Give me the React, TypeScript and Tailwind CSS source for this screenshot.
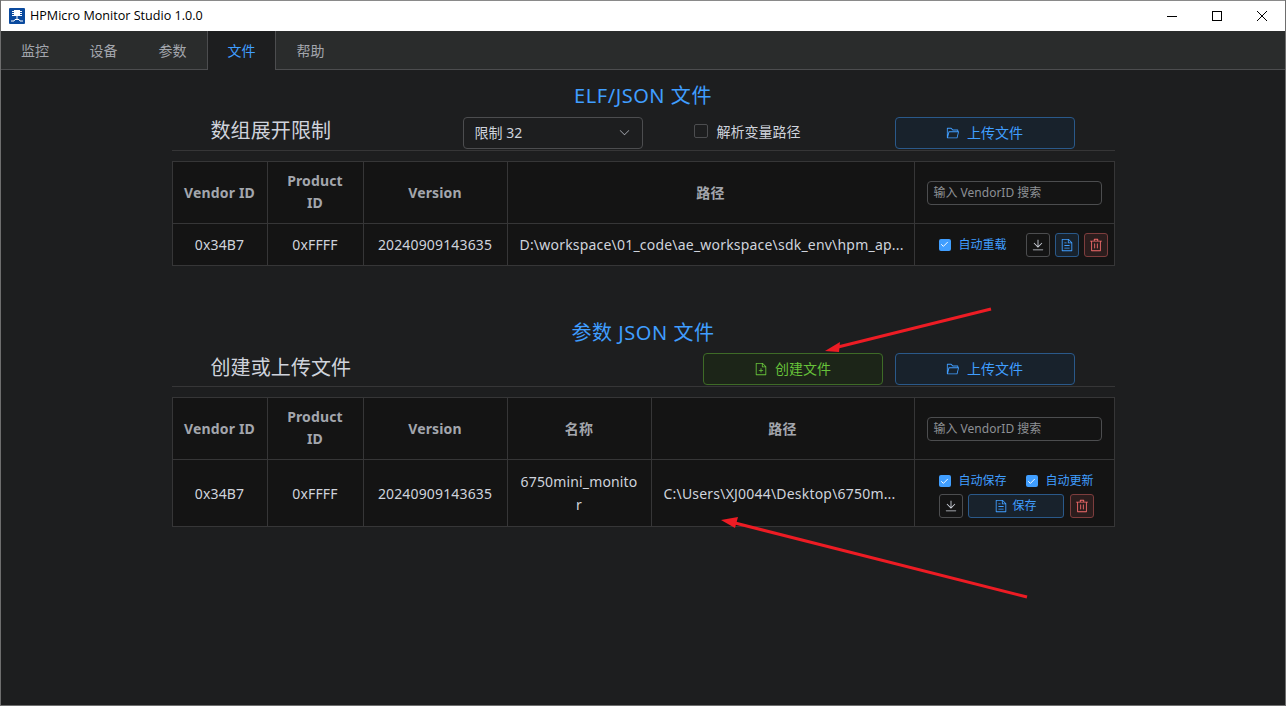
import React from "react";
import { Check } from "lucide-react";

const tabs = ["监控", "设备", "参数", "文件", "帮助"];
const cellB = "border-r border-b border-[#363637] text-center align-middle";
const th = `${cellB} text-[14px] font-bold leading-[22px] tracking-[0.15px] text-[#a3a6ad] px-[10px]`;
const td = `${cellB} text-[14px] leading-[23px] tracking-[0.15px] text-[#cfd3dc] px-[12px]`;
const pathCell = "border-r border-b border-[#363637] text-left align-middle whitespace-nowrap text-[14px] tracking-[0.2px] text-[#cfd3dc] px-[12px]";

// element style icons, 1024 box
const paths = {
  dl: "M160 832h704a32 32 0 1 1 0 64H160a32 32 0 1 1 0-64m384-253.696 236.288-236.352 45.248 45.248L508.8 704 192 387.2l45.248-45.248L480 584.704V128h64z",
  doc: "M832 384H576V128H192v768h640zm-26.496-64L640 154.496V320zM160 64h480l256 256v608a32 32 0 0 1-32 32H160a32 32 0 0 1-32-32V96a32 32 0 0 1 32-32m160 448h384v64H320zm0-192h160v64H320zm0 384h384v64H320z",
  del: "M160 256H96a32 32 0 0 1 0-64h256V95.936a32 32 0 0 1 32-32h256a32 32 0 0 1 32 32V192h256a32 32 0 1 1 0 64h-64v672a32 32 0 0 1-32 32H192a32 32 0 0 1-32-32zm448-64v-64H416v64zM224 896h576V256H224zm192-128a32 32 0 0 1-32-32V416a32 32 0 0 1 64 0v320a32 32 0 0 1-32 32m192 0a32 32 0 0 1-32-32V416a32 32 0 0 1 64 0v320a32 32 0 0 1-32 32",
  folder: "M878.08 448H241.92l-96 384h636.16l96-384zM832 384v-64H485.76L357.504 192H128v448l57.92-231.744A32 32 0 0 1 216.96 384zm-24.96 512H96a32 32 0 0 1-32-32V160a32 32 0 0 1 32-32h287.872l128.384 128H864a32 32 0 0 1 32 32v96h23.04a32 32 0 0 1 31.04 39.744l-112 448A32 32 0 0 1 807.04 896",
  add: "M832 384H576V128H192v768h640zm-26.496-64L640 154.496V320zM160 64h480l256 256v608a32 32 0 0 1-32 32H160a32 32 0 0 1-32-32V96a32 32 0 0 1 32-32m320 512V448h64v128h128v64H544v128h-64V640H352v-64z",
  down: "M831.872 340.864 512 652.672 192.128 340.864a30.59 30.59 0 0 0-42.752 0 29.12 29.12 0 0 0 0 41.6L489.664 714.24a32 32 0 0 0 44.672 0l340.288-331.712a29.12 29.12 0 0 0 0-41.728 30.59 30.59 0 0 0-42.752 0z",
};

const Ico = ({ name, size }: { name: keyof typeof paths; size: number }) => (
  <svg width={size} height={size} viewBox="0 0 1024 1024" fill="currentColor">
    <path d={paths[name]} />
  </svg>
);

const Box = ({ label }: { label: string }) => (
  <label className="flex items-center gap-[8px] text-[12px] text-[#409eff]">
    <span className="flex h-[12px] w-[12px] items-center justify-center rounded-[2px] bg-[#409eff]">
      <Check size={9} strokeWidth={2.5} className="text-white" />
    </span>
    {label}
  </label>
);

const IconBtn = ({ kind }: { kind: "dl" | "doc" | "del" }) => {
  const color =
    kind === "dl"
      ? "border-[#4c4d4f] text-[#cfd3dc]"
      : kind === "doc"
        ? "border-[#2a598a] bg-[#18222c] text-[#409eff]"
        : "border-[#7d3d3d] bg-[#2b1d1d] text-[#f56c6c]";
  return (
    <button className={`flex h-[24px] w-[24px] items-center justify-center rounded-[3px] border ${color}`}>
      <Ico name={kind} size={14} />
    </button>
  );
};

const ActionBtn = ({ green, label }: { green?: boolean; label: string }) => (
  <button
    className={`flex h-[32px] w-[180px] items-center justify-center gap-[7px] rounded-[4px] border pb-[1px] text-[14px] ${
      green ? "border-[#3e6b27] bg-[#1c2518] text-[#67c23a]" : "border-[#2a598a] bg-[#18222c] text-[#409eff]"
    }`}
  >
    <Ico name={green ? "add" : "folder"} size={14} />
    {label}
  </button>
);

const Search = () => (
  <div className="flex h-[24px] w-[175px] items-center rounded-[4px] border border-[#4c4d4f] pl-[6px] text-left text-[12px] text-[#8d9095]">
    输入 VendorID 搜索
  </div>
);

export default function App() {
  return (
    <div
      className="relative flex h-[706px] w-[1286px] flex-col overflow-hidden border border-t-0 border-[#6e6e6e] bg-[#1d1e1f]"
      style={{ fontFamily: '"Noto Sans", "Noto Sans CJK SC", sans-serif' }}
    >
      {/* title bar */}
      <div className="flex h-[31px] items-center border-t border-[#8a8a8a] bg-white pl-[8px] text-black">
        <svg width="16" height="16" viewBox="0 0 16 16">
          <rect width="16" height="16" rx="1" fill="#0b4a9e" />
          <rect x="5" y="2" width="6" height="6" fill="#fff" />
          <path d="M3 3.5h10M3 5.5h10M3 7.5h10M8 8v3" stroke="#fff" fill="none" />
          <path d="M2 13h3l1-1.500h4l1 1.500h3" stroke="#fff" fill="none" />
        </svg>
        <span className="ml-[5px] text-[12.6px]" style={{ fontFamily: '"Open Sans", sans-serif' }}>
          HPMicro Monitor Studio 1.0.0
        </span>
        <div className="ml-auto flex items-center text-black">
          <svg width="12" height="12" viewBox="0 0 12 12" className="mr-[33px]">
            <path d="M1 6.500h10" stroke="#000" fill="none" />
          </svg>
          <svg width="12" height="12" viewBox="0 0 12 12" className="mr-[33px]">
            <rect x="1.500" y="1.500" width="9" height="9" stroke="#000" fill="none" />
          </svg>
          <svg width="12" height="12" viewBox="0 0 12 12" className="mr-[17px]">
            <path d="M1 1l10 10M11 1L1 11" stroke="#000" fill="none" />
          </svg>
        </div>
      </div>

      {/* tabs */}
      <div className="flex h-[39px] bg-[#2a2c2c]">
        {tabs.map((t, i) => (
          <div
            key={t}
            className={`flex h-[39px] items-center justify-center text-[14px] ${i === 0 ? "w-[68px]" : "w-[69px]"} ${
              i === 3
                ? "border-x border-[#4c4d4f] bg-[#1d1e1f] text-[#409eff]"
                : "border-b border-[#4c4d4f] text-[#a3a6ad]"
            }`}
          >
            {t}
          </div>
        ))}
        <div className="flex-1 border-b border-[#4c4d4f]" />
      </div>

      <div className="mx-auto w-[943px]">
        {/* elf section */}
        <h2 className="mt-[12px] h-[28px] text-center text-[20px] leading-[28px] tracking-[0.55px] text-[#409eff]">ELF/JSON 文件</h2>
        <div className="mt-[7px] flex h-[34px] items-start border-b border-[#363637] pl-[39px]">
          <div className="w-[252px] text-[20px] leading-[28px] tracking-[0.1px] text-[#cfd3dc]">数组展开限制</div>
          <div className="flex h-[32px] w-[180px] items-center justify-between rounded-[4px] border border-[#4c4d4f] pb-[1px] pl-[11px] pr-[11px] text-[14px] text-[#cfd3dc]">
            限制 32
            <span className="text-[#a3a6ad]">
              <Ico name="down" size={13} />
            </span>
          </div>
          <div className="ml-[51px] flex h-[28px] w-[201px] items-center gap-[9px] text-[14px] text-[#cfd3dc]">
            <span className="h-[14px] w-[14px] rounded-[2px] border border-[#4c4d4f]" />
            解析变量路径
          </div>
          <ActionBtn label="上传文件" />
        </div>
        <table className="mt-[10px] w-[943px] table-fixed border-separate border-spacing-0 border-t border-l border-[#363637] bg-[#141414]">
          <colgroup>
            <col className="w-[95px]" />
            <col className="w-[96px]" />
            <col className="w-[144px]" />
            <col className="w-[407px]" />
            <col />
          </colgroup>
          <tbody>
            <tr className="h-[62px]">
              <th className={th}>Vendor ID</th>
              <th className={`${th} pb-[2px]`}>Product ID</th>
              <th className={th}>Version</th>
              <th className={th}>路径</th>
              <th className={`${cellB} px-[12px] font-normal`}>
                <Search />
              </th>
            </tr>
            <tr className="h-[42px]">
              <td className={td}>0x34B7</td>
              <td className={td}>0xFFFF</td>
              <td className={`${td} whitespace-nowrap`}>20240909143635</td>
              <td className={pathCell}>D:\workspace\01_code\ae_workspace\sdk_env\hpm_ap...</td>
              <td className={cellB}>
                <div className="flex items-center pl-[24px]">
                  <Box label="自动重载" />
                  <div className="ml-[19px] flex gap-[5px]">
                    <IconBtn kind="dl" />
                    <IconBtn kind="doc" />
                    <IconBtn kind="del" />
                  </div>
                </div>
              </td>
            </tr>
          </tbody>
        </table>

        {/* param section */}
        <h2 className="mt-[53px] h-[28px] text-center text-[20px] leading-[28px] tracking-[0.55px] text-[#409eff]">参数 JSON 文件</h2>
        <div className="mt-[6px] flex h-[34px] items-start border-b border-[#363637] pl-[39px]">
          <div className="w-[492px] pt-[1px] text-[20px] leading-[28px] tracking-[0.1px] text-[#cfd3dc]">创建或上传文件</div>
          <ActionBtn green label="创建文件" />
          <div className="ml-[12px]">
            <ActionBtn label="上传文件" />
          </div>
        </div>
        <table className="mt-[10px] w-[943px] table-fixed border-separate border-spacing-0 border-t border-l border-[#363637] bg-[#141414]">
          <colgroup>
            <col className="w-[95px]" />
            <col className="w-[96px]" />
            <col className="w-[144px]" />
            <col className="w-[144px]" />
            <col className="w-[263px]" />
            <col />
          </colgroup>
          <tbody>
            <tr className="h-[62px]">
              <th className={th}>Vendor ID</th>
              <th className={`${th} pb-[2px]`}>Product ID</th>
              <th className={th}>Version</th>
              <th className={th}>名称</th>
              <th className={th}>路径</th>
              <th className={`${cellB} px-[12px] font-normal`}>
                <Search />
              </th>
            </tr>
            <tr className="h-[67px]">
              <td className={td}>0x34B7</td>
              <td className={td}>0xFFFF</td>
              <td className={`${td} whitespace-nowrap`}>20240909143635</td>
              <td className={`${td} break-all`}>6750mini_monitor</td>
              <td className={pathCell}>C:\Users\XJ0044\Desktop\6750m...</td>
              <td className={cellB}>
                <div className="flex flex-col gap-[4px] pl-[24px] pt-[4px]">
                  <div className="flex gap-[19px]">
                    <Box label="自动保存" />
                    <Box label="自动更新" />
                  </div>
                  <div className="flex gap-[5px]">
                    <IconBtn kind="dl" />
                    <button className="flex h-[24px] w-[96px] items-center justify-center gap-[4px] rounded-[3px] border border-[#2a598a] bg-[#18222c] text-[12px] text-[#409eff]">
                      <Ico name="doc" size={14} />
                      保存
                    </button>
                    <div className="ml-[1px]">
                      <IconBtn kind="del" />
                    </div>
                  </div>
                </div>
              </td>
            </tr>
          </tbody>
        </table>
      </div>

      {/* red arrows drawn on the screenshot */}
      <svg className="pointer-events-none absolute left-[-1px] top-0" width="1286" height="706">
        <path d="M991 309L838 347" stroke="#ed1c24" strokeWidth="3" fill="none" />
        <path d="M825 351L840 342L839 352Z" fill="#ed1c24" />
        <path d="M1027 597L735 523" stroke="#ed1c24" strokeWidth="3" fill="none" />
        <path d="M721 520L738 517L735 528Z" fill="#ed1c24" />
      </svg>
    </div>
  );
}
